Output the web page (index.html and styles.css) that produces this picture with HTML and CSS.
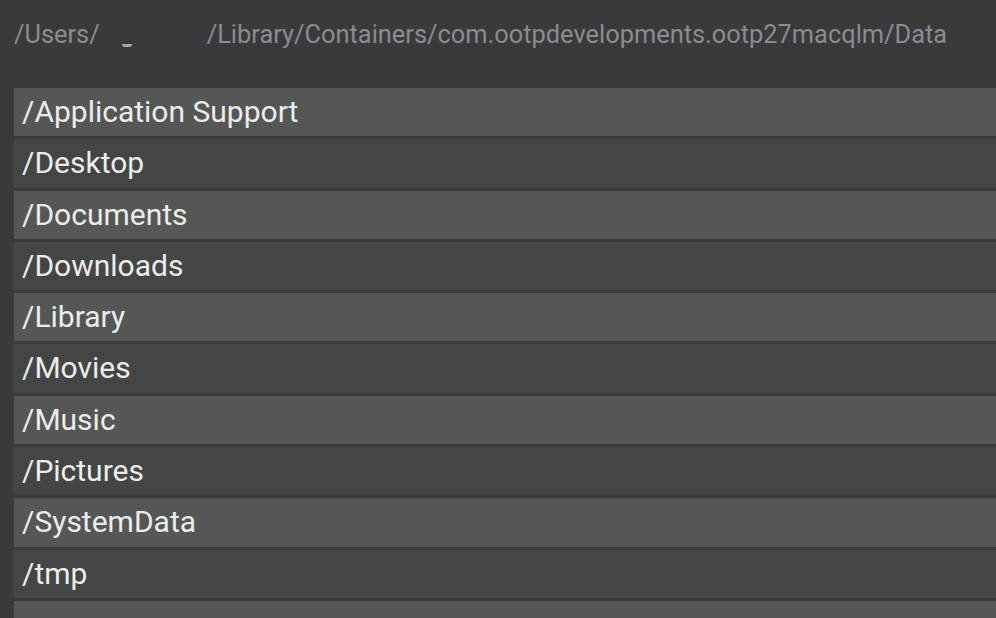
FILE: index.html
```html
<!DOCTYPE html>
<html>
<head>
<meta charset="utf-8">
<link rel="stylesheet" href="styles.css">
</head>
<body>
<div class="page">
  <div class="path"><span class="seg">/Users/</span><span class="redacted"><span class="mark"></span></span><span class="seg">/Library/Containers/com.ootpdevelopments.ootp27macqlm/Data</span></div>
  <div class="list">
    <div class="row light">/Application Support</div>
    <div class="row dark">/Desktop</div>
    <div class="row light">/Documents</div>
    <div class="row dark">/Downloads</div>
    <div class="row light">/Library</div>
    <div class="row dark">/Movies</div>
    <div class="row light">/Music</div>
    <div class="row dark">/Pictures</div>
    <div class="row light">/SystemData</div>
    <div class="row dark">/tmp</div>
    <div class="row light"></div>
  </div>
</div>
</body>
</html>
```
FILE: styles.css
```css
html, body {
  margin: 0;
  padding: 0;
  background: #3a3a3c;
  overflow: hidden;
}
.page {
  width: 996px;
  height: 618px;
  font-family: Roboto, "Liberation Sans", sans-serif;
  display: flex;
  flex-direction: column;
  overflow: hidden;
}
.path {
  flex: 0 0 88px;
  padding: 19px 0 0 14px;
  box-sizing: border-box;
  color: #8b8b90;
  font-size: 25.4px;
  line-height: 30px;
  white-space: nowrap;
  display: flex;
}
.redacted {
  width: 107px;
  position: relative;
}
.mark {
  position: absolute;
  left: 22px;
  top: 25px;
  width: 10px;
  height: 3px;
  border-radius: 0 0 5px 5px;
  background: #a8a8ac;
}
.list {
  flex: 0 0 auto;
  margin-left: 14px;
  display: flex;
  flex-direction: column;
  gap: 3px;
  background: #393a3a;
}
.row {
  flex: 0 0 48.3px;
  padding-left: 8px;
  box-sizing: border-box;
  color: #ececec;
  font-size: 30px;
  line-height: 48.3px;
  white-space: nowrap;
}
.light { background: #555756; }
.dark { background: #444545; }
```
